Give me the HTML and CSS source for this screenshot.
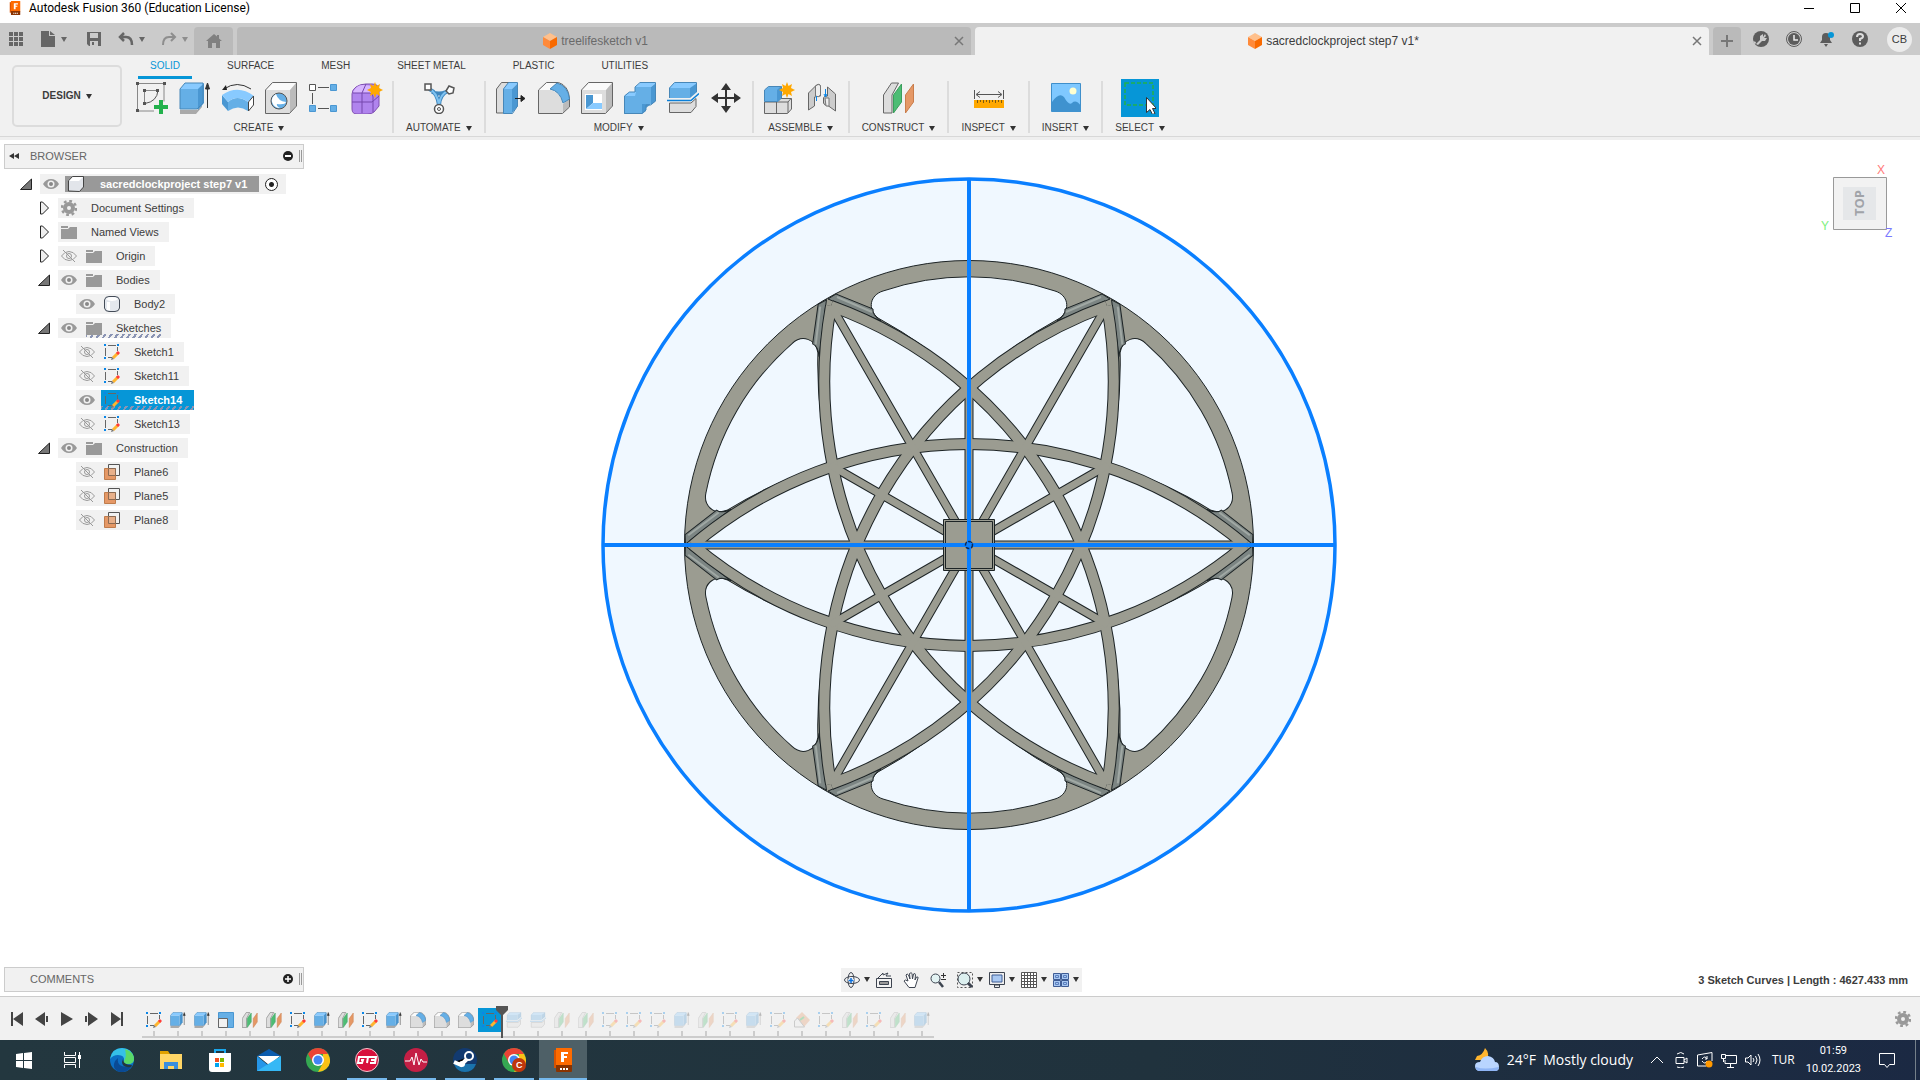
FILE: index.html
```html
<!DOCTYPE html>
<html lang="en">
<head>
    <meta charset="UTF-8">
    <meta name="viewport" content="width=device-width, initial-scale=1.0">
    <title>Autodesk Fusion 360 (Education License)</title>
    <link rel="stylesheet" href="styles.css">
</head>
<body>
    <!-- Icon library -->
    <svg class="defs" aria-hidden="true">
        <symbol id="fusion" viewBox="0 0 24 24"><path fill="#d95300" d="M3 2h3v18H3z"/><path fill="#ff6b00" d="M5 0h15q1 0 1 1v17H5z"/><path fill="#8a3300" d="M5 17h16v6q0 1-1 1H6q-1 0-1-1z"/><path fill="#fff" d="M10 4h7v2h-4v2h3v2h-3v4h-3z"/><path stroke="#fff" stroke-width="2" stroke-dasharray="2 1" d="M9 21h8"/></symbol>
        <symbol id="cube" viewBox="0 0 16 16"><path fill="#ffc08c" d="M8 0l7 4-7 4-7-4z"/><path fill="#ff8a3a" d="M1 4l7 4v8l-7-4z"/><path fill="#f96a00" d="M15 4L8 8v8l7-4z"/></symbol>
        <symbol id="sketch" viewBox="0 0 16 16"><path fill="none" stroke="#666" d="M4 1.500h8M1.500 4v8M13.500 3v4M4 13.500h4"/><path fill="#0a86e8" d="M0 0h2v2H0zM13 0h2v2h-2zM0 13h2v2H0z"/><path stroke="#ffb52e" stroke-width="3" d="M9 14l5-5"/><path stroke="#ff3b3b" stroke-width="3" d="M13 10l2-2"/><path fill="#777" d="M7 16l1-3 2 2z"/></symbol>
        <symbol id="extrude" viewBox="0 0 32 32"><path fill="#aaa" d="M1 28h17l5-6v3l-6 7H1z"/><path fill="#4a97d2" d="M19 6l6-5v20l-6 7z"/><path fill="#65afe6" d="M1 7h18v20H1z"/><path fill="#88caff" d="M1 7l5-6h19l-6 6z"/><path fill="none" stroke="#4787b8" d="M1 27V7l5-6h18v20l-6 6z"/><path stroke="#333" fill="#333" d="M28.500 26V4M26.500 7l2-6 2 6z"/></symbol>
        <symbol id="create-sketch" viewBox="0 0 32 32"><g fill="none" stroke="#888"><path d="M3 1.500h25v18M1.500 3v26H18M9 8.500h12.500M8.500 10v10"/><path stroke="#555" d="M9 21.500q12-2 13-13"/></g><path fill="#555" d="M0 0h3v3H0zM27 0h3v3h-3zM0 27h3v3H0zM7 7h3v3H7zM20 7h3v3h-3zM7 20h3v3H7z"/><path fill="#22b14c" d="M23 18h4v5h5v4h-5v5h-4v-5h-5v-4h5z"/></symbol>
        <symbol id="revolve" viewBox="0 0 32 32"><path fill="#4a97d2" d="M0 13l6 7v9l-6-7z"/><path fill="#65afe6" d="M6 20q9-8 20 0v9q-10-7-20 0z"/><path fill="#88caff" d="M0 13q16-11 32 1l-6 6q-11-8-20 0z"/><path fill="#fff" stroke="#444" d="M26.500 20l5-6v9l-5 6z"/><path fill="none" stroke="#333" stroke-width="1" d="M2 7Q15-2 29 7"/><path fill="#222" d="M0 8l4-5 1 5z"/></symbol>
        <symbol id="box" viewBox="0 0 32 32"><path fill="#ddd" d="M1 8h24v23H1z"/><path fill="#fafafa" d="M1 8l7-7h23l-6 7z"/><path fill="#bbb" d="M25 8l6-7v23l-6 7z"/><path fill="none" stroke="#666" d="M.5 31.500V8l7-7.500h24V24l-7 7.500z"/></symbol>
        <symbol id="hole" viewBox="0 0 32 32"><use href="#box"/><circle cx="14" cy="19" r="8" fill="#65afe6" stroke="#555"/><path fill="#fff" d="M11 12q-5 3-4 8 2 6 8 6-4-2-3-4 8 1 9-2-8-1-10-8z"/></symbol>
        <symbol id="pattern" viewBox="0 0 32 32"><path fill="none" stroke="#555" d="M10 5.500h11M4.500 11v11M10 26.500h11"/><path fill="#fff" stroke="#555" d="M1.500 2.500h6v6h-6z"/><path fill="#65afe6" stroke="#4a97d2" d="M22.500 2.500h6v6h-6zM1.500 23.500h6v6h-6zM22.500 23.500h6v6h-6z"/></symbol>
        <symbol id="star" viewBox="0 0 16 16"><path fill="#ffa800" d="M8 0l1.500 4L13 2l-1 4 4 2-4 2 1 4-3.500-2L8 16l-1.500-4L3 14l1-4-4-2 4-2-1-4 3.500 2z"/></symbol>
        <symbol id="form" viewBox="0 0 32 32"><path fill="#b084ee" stroke="#8050b0" d="M1 12q0-4 4-7t10-3h6q7 0 7 6v16l-5 6q-2 2-7 2H6q-5 0-5-5z"/><path fill="#d7b5ff" d="M2 10q4-8 11-7l9 1-2 7H3z"/><path fill="none" stroke="#7546ad" d="M1 20h20l7-6M11 31V11l4-9M2 11h17q3 0 3 4v15M22 12l5-6"/><use href="#star" x="16" y="0" width="16" height="16"/></symbol>
        <symbol id="automate" viewBox="0 0 32 32"><path fill="none" stroke="#3f86bd" stroke-width="4" d="M6 7q8 3 10 16M25 9q-8 3-9 14M9 10q7 3 14 0"/><path fill="none" stroke="#7fc3f2" stroke-width="2" d="M6 7q8 3 10 16M25 9q-8 3-9 14"/><path fill="#fff" stroke="#555" stroke-width="1.500" d="M2 2h6v6H2zM23 9l3-5 5 2-1 5-4 1z"/><circle cx="16" cy="27" r="4.500" fill="#fff" stroke="#555" stroke-width="1.500"/><circle cx="16" cy="27" r="1.500" fill="none" stroke="#555"/></symbol>
        <symbol id="presspull" viewBox="0 0 32 32"><path fill="#ddd" stroke="#666" d="M1.500 31V7l5-6.500h8L9 7v24z"/><path fill="#65afe6" d="M8 7h9v25H8z"/><path fill="#88caff" d="M8 7l5-6h10l-6 6z"/><path fill="#4a97d2" d="M17 7l6-6v23l-6 7z"/><path fill="none" stroke="#4787b8" d="M8.500 31.500V7l5-6.500h9V24l-5 7.500z"/><path stroke="#222" fill="#222" d="M20 16.500h7M26 13.500l4 3-4 3z"/></symbol>
        <symbol id="fillet" viewBox="0 0 32 32"><path fill="#fafafa" d="M1 8l8-7h12q10 3 11 17l-7 4Q22 8 12 8z"/><path fill="#ddd" d="M1 8h12q10 3 12 14v9H1z"/><path fill="#bbb" d="M25 22l6-5v8l-6 6z"/><path fill="none" stroke="#666" d="M.5 31.500V8l8-7.500h12q10 3 11 16V25l-7 6.500z"/><path fill="#65afe6" stroke="#4787b8" d="M12 7l7-6q11 3 12.500 16L25 21Q22 9 12 7z"/></symbol>
        <symbol id="shell" viewBox="0 0 32 32"><use href="#box"/><path fill="#fff" d="M4 12h17v16H4z"/><path fill="#4a97d2" d="M5 13h7v8l-7 6z"/><path fill="#88caff" d="M5 27l7-6h9v6z"/></symbol>
        <symbol id="combine" viewBox="0 0 32 32"><path fill="#65afe6" d="M0 14h11V5h16v17h-9v10H0z"/><path fill="#88caff" d="M0 14l5-4h7l-1 4zM11 5l5-4h16l-5 4z"/><path fill="#4a97d2" d="M27 5l5-4v18l-5 4zM18 22h9l-5 4v3l-4 3z"/><path fill="none" stroke="#4787b8" d="M.5 31.500V14l5-4H11V5L16 .5h15.500V19l-5 4H22v5l-4 3.500z"/></symbol>
        <symbol id="split" viewBox="0 0 32 32"><path fill="#ddd" stroke="#666" d="M2.500 30.500V21H24l5-4.500v8l-5 6z"/><path fill="#65afe6" d="M2 6h21v10H2z"/><path fill="#88caff" d="M2 6l5-5h23l-6 5z"/><path fill="#4a97d2" d="M23 6l7-5v9l-7 6z"/><path fill="none" stroke="#4787b8" d="M2.500 16V6l5-5.500h22V10"/><path fill="none" stroke="#0a7fd8" stroke-width="1.500" d="M0 18.500h24l8-7"/></symbol>
        <symbol id="move" viewBox="0 0 32 32"><path fill="#333" d="M16 1l5 7h-4v7h7v-4l7 5-7 5v-4h-7v7h4l-5 7-5-7h4v-7H8v4l-7-5 7-5v4h7V8h-4z"/></symbol>
        <symbol id="component" viewBox="0 0 32 32"><path fill="#ddd" stroke="#666" d="M1.500 31.500V20l5-3.500h22V27l-4 4.500zM13.500 31V20l4-4M2 20h23v11M25 20l3-3.500"/><path fill="#65afe6" stroke="#4787b8" d="M1.500 19.500V8l4-3.500h13V16L15 19.500z"/><path fill="#4a97d2" d="M14 8l4-4v12l-4 4z"/><use href="#star" x="16" y="0" width="16" height="16"/></symbol>
        <symbol id="joint" viewBox="0 0 32 32"><path fill="#ccc" stroke="#666" d="M2.500 28V11l8-8q4-2 4 2v9l-6 1v9zM17.500 16q0-2 4-2V5l8 7v17l-7-5q-5-1-5-3z"/><path fill="#eee" stroke="#777" d="M9.500 4q4-3 5 0v9q-2 3-5 1zM19 16h4v8h-3z"/><path fill="none" stroke="#0a86e8" d="M10.500 14v5M19.500 7v7M18 12l1.500 3 1.500-3"/></symbol>
        <symbol id="plane" viewBox="0 0 32 32"><path fill="#ddd" stroke="#666" d="M.5 31V13l8-12h7L9 13v18z"/><path fill="#4dbd74" stroke="#3a9e5c" d="M10.500 31V13l8-11v18z"/><path fill="#e59866" stroke="#c97d4b" d="M22.500 31V13l8-11v18z"/></symbol>
        <symbol id="measure" viewBox="0 0 32 32"><path fill="none" stroke="#555" d="M1.500 8v9M30.500 8v9M4 12.500h24M7 9.500l-4 3 4 3M25 9.500l4 3-4 3"/><path fill="#ffa800" d="M1 18h30v8H1z"/><path stroke="#7c5a10" d="M4.500 18v3M7.500 18v2M10.500 18v3M13.500 18v2M16.500 18v3M19.500 18v2M22.500 18v3M25.500 18v2M28.500 18v3"/></symbol>
        <symbol id="insert" viewBox="0 0 32 32"><path fill="#7fc8ff" stroke="#3f8fcb" d="M1.500 1.500h29v28h-29z"/><circle cx="23" cy="9" r="3.500" fill="#ffffd0"/><path fill="#3f92cf" d="M2 20q7-10 12-5 5 9 8 6 4-4 9 3v6H2z"/></symbol>
        <symbol id="select" viewBox="0 0 32 32"><path fill="none" stroke="#22b14c" stroke-width="1.500" stroke-dasharray="4 2" d="M1 1h28v22H1z"/><path fill="#fff" stroke="#333" d="M22.500 15.500v15l3.500-3 2.500 5 2.500-1-2.500-5h4z"/></symbol>
        <symbol id="scale" viewBox="0 0 16 16"><path fill="#65afe6" stroke="#4a97d2" d="M.5.5h15v15h-15z"/><path fill="#f1f1f1" stroke="#666" d="M.5 6.500h9v9h-9z"/></symbol>
        <symbol id="decal" viewBox="0 0 16 16"><path fill="#e59866" d="M2 6l6-6 8 8-6 7z"/><path fill="#eee" stroke="#777" d="M.5 15V9l3-3 7 9z"/><path stroke="#22b14c" stroke-width="2" d="M6 8l4-3"/></symbol>
        <symbol id="eye" viewBox="0 0 16 16"><path fill="#999" d="M0 8q3-5 8-5t8 5q-3 5-8 5T0 8z"/><circle cx="8" cy="8" r="3.500" fill="#f1f1f1"/><circle cx="8" cy="8" r="2" fill="#888"/></symbol>
        <symbol id="eye-off" viewBox="0 0 16 16"><g fill="none" stroke="#999"><path d="M.5 8q3-4.500 7.500-4.500T15.500 8q-3 4.500-7.500 4.500T.5 8z"/><circle cx="8" cy="8" r="2.500"/><path d="M2 2l12 12"/></g></symbol>
        <symbol id="folder" viewBox="0 0 16 16"><path fill="#999" d="M0 2h7v2H0zM0 5h7l2-2h7v12H0z"/></symbol>
        <symbol id="gear" viewBox="0 0 16 16"><circle cx="8" cy="8" r="4" fill="none" stroke="#999" stroke-width="4"/><circle cx="8" cy="8" r="7" fill="none" stroke="#999" stroke-width="2.500" stroke-dasharray="2.750 2.750"/></symbol>
        <symbol id="body" viewBox="0 0 16 16"><path fill="#e4e8ee" stroke="#444c58" d="M.5 4Q1 .5 5 .5h6q4 0 4.500 3.500v8q-.5 3.500-4.500 3.500H5Q1 15.500.5 12z"/><path fill="#fff" d="M2 3q2-2 6-2t6 2q-2 2-6 2T2 3zM3 6h3v8H3z"/></symbol>
        <symbol id="root" viewBox="0 0 16 16"><path fill="#e2e5ea" stroke="#444" d="M.5 15V5l4-4.500h11V11l-4 4.500z"/><path fill="#fff" d="M1 5l4-4h10l-4 4z"/></symbol>
        <symbol id="cplane" viewBox="0 0 16 16"><path fill="none" stroke="#555" d="M4.500 11V.5h11v11H12"/><path fill="#e59866" stroke="#bf7c4c" d="M.5 4.500h11v11H.5z"/><path fill="#e8b08a" stroke="#8c6a52" d="M4.500 4.500h7v7h-7z"/></symbol>
        <symbol id="open" viewBox="0 0 12 12"><path fill="#777" stroke="#222" d="M.5 11.500h11V1z"/></symbol>
        <symbol id="closed" viewBox="0 0 12 14"><path fill="#eee" stroke="#222" d="M2.500 1h2l6 6-6 6h-2z"/></symbol>
    </svg>

    <header class="titlebar">
        <svg class="i14"><use href="#fusion"/></svg>
        <h1>Autodesk Fusion 360 (Education License)</h1>
        <div class="window-buttons">
            <button aria-label="Minimize"><svg viewBox="0 0 12 12"><path d="M1 6.500h10"/></svg></button>
            <button aria-label="Maximize"><svg viewBox="0 0 12 12"><path d="M1.500 1.500h9v9h-9z"/></svg></button>
            <button aria-label="Close"><svg viewBox="0 0 12 12"><path d="M1 1l10 10M11 1L1 11"/></svg></button>
        </div>
    </header>

    <nav class="tabbar">
        <div class="quick">
            <button aria-label="Data panel"><svg viewBox="0 0 16 16"><path fill="#666" d="M1 1h4v4H1zM6 1h4v4H6zM11 1h4v4h-4zM1 6h4v4H1zM6 6h4v4H6zM11 6h4v4h-4zM1 11h4v4H1zM6 11h4v4H6zM11 11h4v4h-4z"/></svg></button>
            <button class="file" aria-label="File"><svg viewBox="0 0 16 16"><path fill="#666" d="M1 0h8v5h6v11H1zM10 0l5 4h-5z"/></svg><span class="caret"></span></button>
            <button class="save" aria-label="Save"><svg viewBox="0 0 16 16"><path fill="#666" fill-rule="evenodd" d="M1 1h14v14H3l-2-2zm3 1v5h8V2zm0 8v5h8v-5zm2 1h2v3H6z"/></svg></button>
            <button aria-label="Undo"><svg viewBox="0 0 16 16"><path fill="none" stroke="#666" stroke-width="2.500" d="M6 2L2 6l4 4M2 6h6q6 0 6 8"/></svg><span class="caret"></span></button>
            <button class="dim" aria-label="Redo"><svg viewBox="0 0 16 16"><path fill="none" stroke="#666" stroke-width="2" d="M10 2l4 4-4 4M14 6H8q-6 0-6 8"/></svg><span class="caret"></span></button>
        </div>
        <button class="home" aria-label="Home"><svg viewBox="0 0 16 16"><path fill="#808080" d="M0 8l8-7 3 2.500V2h2v3.500L16 8h-2v7h-4v-5H6v5H2V8z"/></svg></button>
        <div class="tab"><a href="#"><svg class="i16"><use href="#cube"/></svg>treelifesketch v1</a><button class="close" aria-label="Close tab"><svg viewBox="0 0 12 12"><path d="M2 2l8 8M10 2l-8 8"/></svg></button></div>
        <div class="tab current"><a href="#"><svg class="i16"><use href="#cube"/></svg>sacredclockproject step7 v1*</a><button class="close" aria-label="Close tab"><svg viewBox="0 0 12 12"><path d="M2 2l8 8M10 2l-8 8"/></svg></button></div>
        <button class="new-tab" aria-label="New design"><svg viewBox="0 0 16 16"><path stroke="#777" stroke-width="2" d="M8 2v12M2 8h12"/></svg></button>
        <div class="account">
            <button aria-label="Extensions"><svg viewBox="0 0 16 16"><circle cx="8" cy="8" r="8" fill="#5c5c5c"/><path fill="#ccc" d="M3 13l4-4V5l3-2v3l2-3 1 2-2 2h3l-2 3H9l-4 4zM0 10l3 1-1 3z"/></svg></button>
            <button aria-label="Job status"><svg viewBox="0 0 16 16"><circle cx="8" cy="8" r="7.500" fill="#ccc" stroke="#5c5c5c"/><circle cx="8" cy="8" r="6" fill="#5c5c5c"/><path fill="none" stroke="#eee" stroke-width="1.500" d="M8 4v5h4"/></svg></button>
            <button aria-label="Notifications"><svg viewBox="0 0 16 16"><path fill="#5c5c5c" d="M1 12l2-3V6q0-4 4-4t4 4v3l2 3zM5 13h4l-2 3z"/><circle cx="12" cy="4" r="3" fill="#0696d7"/></svg></button>
            <button aria-label="Help"><svg viewBox="0 0 16 16"><circle cx="8" cy="8" r="8" fill="#5c5c5c"/><path fill="none" stroke="#ddd" stroke-width="2" d="M5 6q0-3 3-3t3 2.500Q11 7 8 8v2M8 11.500v2"/></svg></button>
            <button class="avatar">CB</button>
        </div>
    </nav>

    <section class="ribbon">
        <button class="workspace-switch">DESIGN<span class="caret"></span></button>
        <div class="ribbon-main">
            <nav class="ribbon-tabs">
                <a href="#" class="on">SOLID</a><a href="#">SURFACE</a><a href="#">MESH</a><a href="#">SHEET METAL</a><a href="#">PLASTIC</a><a href="#">UTILITIES</a>
            </nav>
            <div class="groups">
                <div class="group">
                    <div class="tools"><button aria-label="Create Sketch"><svg><use href="#create-sketch"/></svg></button><button aria-label="Extrude"><svg><use href="#extrude"/></svg></button><button aria-label="Revolve"><svg><use href="#revolve"/></svg></button><button aria-label="Hole"><svg><use href="#hole"/></svg></button><button aria-label="Pattern"><svg><use href="#pattern"/></svg></button><button aria-label="Create Form"><svg><use href="#form"/></svg></button></div>
                    <button class="menu">CREATE<span class="caret"></span></button>
                </div>
                <div class="group">
                    <div class="tools"><button aria-label="Automated Modeling"><svg><use href="#automate"/></svg></button></div>
                    <button class="menu">AUTOMATE<span class="caret"></span></button>
                </div>
                <div class="group">
                    <div class="tools"><button aria-label="Press Pull"><svg><use href="#presspull"/></svg></button><button aria-label="Fillet"><svg><use href="#fillet"/></svg></button><button aria-label="Shell"><svg><use href="#shell"/></svg></button><button aria-label="Combine"><svg><use href="#combine"/></svg></button><button aria-label="Split Body"><svg><use href="#split"/></svg></button><button aria-label="Move"><svg><use href="#move"/></svg></button></div>
                    <button class="menu">MODIFY<span class="caret"></span></button>
                </div>
                <div class="group">
                    <div class="tools"><button aria-label="New Component"><svg><use href="#component"/></svg></button><button aria-label="Joint"><svg><use href="#joint"/></svg></button></div>
                    <button class="menu">ASSEMBLE<span class="caret"></span></button>
                </div>
                <div class="group">
                    <div class="tools"><button aria-label="Offset Plane"><svg><use href="#plane"/></svg></button></div>
                    <button class="menu">CONSTRUCT<span class="caret"></span></button>
                </div>
                <div class="group">
                    <div class="tools"><button aria-label="Measure"><svg><use href="#measure"/></svg></button></div>
                    <button class="menu">INSPECT<span class="caret"></span></button>
                </div>
                <div class="group">
                    <div class="tools"><button aria-label="Insert Canvas"><svg><use href="#insert"/></svg></button></div>
                    <button class="menu">INSERT<span class="caret"></span></button>
                </div>
                <div class="group">
                    <div class="tools"><button class="active" aria-label="Select"><svg><use href="#select"/></svg></button></div>
                    <button class="menu">SELECT<span class="caret"></span></button>
                </div>
            </div>
        </div>
    </section>

    <main class="workspace">
        <aside class="browser">
            <div class="panel-head">
                <button aria-label="Collapse"><svg viewBox="0 0 12 12"><path fill="#333" d="M6 3v6L1 6zM11 3v6L6 6z"/></svg></button>
                <h2>BROWSER</h2>
                <button aria-label="Hide panel"><svg viewBox="0 0 12 12"><circle cx="6" cy="6" r="5" fill="#222"/><path stroke="#fff" stroke-width="2" d="M3 6h6"/></svg></button>
                <span class="grip"></span>
            </div>
            <ul class="tree">
                <li class="l1"><svg class="arrow"><use href="#open"/></svg><div class="chip root"><svg><use href="#eye"/></svg><span class="root-name"><svg><use href="#root"/></svg><b>sacredclockproject step7 v1</b></span><input type="radio" checked aria-label="Activate component"></div></li>
                <li class="l2"><svg class="arrow"><use href="#closed"/></svg><div class="chip"><svg><use href="#gear"/></svg><span>Document Settings</span></div></li>
                <li class="l2"><svg class="arrow"><use href="#closed"/></svg><div class="chip"><svg><use href="#folder"/></svg><span>Named Views</span></div></li>
                <li class="l2"><svg class="arrow"><use href="#closed"/></svg><div class="chip"><svg><use href="#eye-off"/></svg><svg><use href="#folder"/></svg><span>Origin</span></div></li>
                <li class="l2"><svg class="arrow"><use href="#open"/></svg><div class="chip"><svg><use href="#eye"/></svg><svg><use href="#folder"/></svg><span>Bodies</span></div></li>
                <li class="l3"><div class="chip"><svg><use href="#eye"/></svg><svg><use href="#body"/></svg><span>Body2</span></div></li>
                <li class="l2"><svg class="arrow"><use href="#open"/></svg><div class="chip"><svg><use href="#eye"/></svg><div class="hatched"><svg><use href="#folder"/></svg><span>Sketches</span></div></div></li>
                <li class="l3"><div class="chip"><svg><use href="#eye-off"/></svg><svg><use href="#sketch"/></svg><span>Sketch1</span></div></li>
                <li class="l3"><div class="chip"><svg><use href="#eye-off"/></svg><svg><use href="#sketch"/></svg><span>Sketch11</span></div></li>
                <li class="l3"><div class="chip picked"><svg><use href="#eye"/></svg><div class="hatched"><svg><use href="#sketch"/></svg><b>Sketch14</b></div></div></li>
                <li class="l3"><div class="chip"><svg><use href="#eye-off"/></svg><svg><use href="#sketch"/></svg><span>Sketch13</span></div></li>
                <li class="l2"><svg class="arrow"><use href="#open"/></svg><div class="chip"><svg><use href="#eye"/></svg><svg><use href="#folder"/></svg><span>Construction</span></div></li>
                <li class="l3"><div class="chip"><svg><use href="#eye-off"/></svg><svg><use href="#cplane"/></svg><span>Plane6</span></div></li>
                <li class="l3"><div class="chip"><svg><use href="#eye-off"/></svg><svg><use href="#cplane"/></svg><span>Plane5</span></div></li>
                <li class="l3"><div class="chip"><svg><use href="#eye-off"/></svg><svg><use href="#cplane"/></svg><span>Plane8</span></div></li>
            </ul>
        </aside>

        <svg class="model" viewBox="-368 -368 736 736" role="img" aria-label="Clock body, top view">
            <defs>
                <path id="arc" d="M-276 0A428 428 0 0 1 276 0"/>
                <g id="pair"><use href="#arc"/><use href="#arc" transform="rotate(180)"/></g>
                <g id="arcs"><use href="#pair"/><use href="#pair" transform="rotate(60)"/><use href="#pair" transform="rotate(120)"/></g>
                <path id="spokes" d="M-272 0H272M0-161V161M-136-236L136 236M136-236L-136 236M-139-80L139 80M139-80L-139 80"/>
                <path id="lens" d="M-276 0A428 428 0 0 1 276 0A428 428 0 0 1-276 0z"/>
                <path id="slot" d="M-86-254A268 268 0 0 1 86-254C99-250 102-236 91-227A428 428 0 0 0 0-161A428 428 0 0 0-91-227C-102-236-99-250-86-254z"/>
                <g id="bevel"><path fill="#7c8583" stroke="#1d2426" d="M-133-251L-96-236Q-97-230-88-224L-141-246z"/><path fill="none" stroke="#a0a8a4" stroke-width="2" d="M-132-248L-97-233"/></g>
                <g id="bevels"><use href="#bevel"/><use href="#bevel" transform="scale(-1 1)"/></g>
            </defs>
            <circle r="366" fill="#f0f8ff"/>
            <circle r="284.500" fill="#9b9c91" stroke="#1d2426"/>
            <g fill="#f0f8ff">
                <use href="#lens"/><use href="#lens" transform="rotate(60)"/><use href="#lens" transform="rotate(120)"/>
                <g stroke="#1d2426"><use href="#slot"/><use href="#slot" transform="rotate(60)"/><use href="#slot" transform="rotate(120)"/><use href="#slot" transform="rotate(180)"/><use href="#slot" transform="rotate(240)"/><use href="#slot" transform="rotate(300)"/></g>
            </g>
            <use href="#bevels"/><use href="#bevels" transform="rotate(60)"/><use href="#bevels" transform="rotate(120)"/><use href="#bevels" transform="rotate(180)"/><use href="#bevels" transform="rotate(240)"/><use href="#bevels" transform="rotate(300)"/>
            <g fill="none" stroke="#1d2426"><use href="#arcs" stroke-width="12"/><use href="#spokes" stroke-width="9"/></g>
            <g fill="none" stroke="#9b9c91"><use href="#arcs" stroke-width="10"/><use href="#spokes" stroke-width="7"/></g>
            <path fill="#9b9c91" stroke="#1d2426" d="M-25.500-25.500h51v51h-51zM-23.500-23.500h47v47h-47z"/>
            <circle r="4" fill="#102a50"/>
            <g fill="none" stroke="#0a7fff"><circle r="366" stroke-width="3.500"/><path stroke-width="4" d="M-366 0H366M0-366V366"/></g>
            <circle r="3.500" fill="none" stroke="#102a50" stroke-width="1.500" stroke-dasharray="3 2"/>
        </svg>

        <svg class="viewcube" viewBox="0 0 80 80" role="img" aria-label="View cube">
            <path fill="#f2f2f2" stroke="#999" d="M13.500 15.500h53v52h-53z"/>
            <path fill="#e5e7e9" d="M23 25h33v33H23z"/>
            <text class="face" transform="translate(44 54) rotate(-90)">TOP</text>
            <text class="axis x" x="57" y="12">X</text>
            <text class="axis y" x="1" y="68">Y</text>
            <text class="axis z" x="65" y="75">Z</text>
        </svg>
    </main>

    <section class="viewbar">
        <div class="panel-head comments">
            <h2>COMMENTS</h2>
            <button aria-label="Show comments"><svg viewBox="0 0 12 12"><circle cx="6" cy="6" r="5" fill="#222"/><path stroke="#fff" stroke-width="1.500" d="M3 6h6M6 3v6"/></svg></button>
            <span class="grip"></span>
        </div>
        <div class="navtools">
            <button aria-label="Orbit"><svg viewBox="0 0 16 16"><g fill="none" stroke="#3d4450"><ellipse cx="8" cy="8" rx="7.500" ry="3.500"/><ellipse cx="7" cy="8" rx="3" ry="7.500"/></g><path fill="none" stroke="#f1f1f1" stroke-width="2" d="M7 5v6M4 8h6"/><path stroke="#0a70e0" stroke-width="1.500" d="M7 6v5M4.500 8.500h5"/></svg><span class="caret"></span></button>
            <button aria-label="Look At"><svg viewBox="0 0 16 16"><path fill="#f4f4f4" stroke="#3d4450" d="M.5 6.500h15v9H.5zM2 6l5-5v2l5-2-2 3h5"/><path fill="#999" stroke="#3d4450" d="M3.500 9.500h9v3h-9z"/></svg></button>
            <button aria-label="Pan"><svg viewBox="0 0 16 16"><path fill="#fff" stroke="#3d4450" d="M6 15.500L1 9q1-2 4 0L3 3q1-2 2.500 0L7 7 6.500 1.500q2-1.500 2.500 0L9.500 7l1-5q2-1 2 .5L12 8l1.500-3q2-.5 1.500 1l-3 9.500z"/></svg></button>
            <button aria-label="Zoom"><svg viewBox="0 0 16 16"><circle cx="5.500" cy="6.500" r="4.500" fill="#e3f3f3" stroke="#3d4450"/><path stroke="#3d4450" stroke-width="2.500" d="M9 10l4 5"/><path stroke="#333" d="M11 3.500h5M13.500 1v5M11 7.500h5"/></svg></button>
            <button aria-label="Fit"><svg viewBox="0 0 16 16"><path fill="none" stroke="#555" stroke-dasharray="2 2" d="M.5.500h15v15H.5z"/><circle cx="7" cy="7" r="6" fill="#dcefef" stroke="#3d4450"/><path stroke="#3d4450" stroke-width="3" d="M11 11l4 4"/></svg><span class="caret"></span></button>
            <button aria-label="Display Settings"><svg viewBox="0 0 16 16"><path fill="#eee" stroke="#3d4450" d="M.5.500h15v12H.5zM5.500 13h5v2.500h-5z"/><path fill="#a9c8f2" stroke="#3f5c94" d="M3 3h10v7H3z"/></svg><span class="caret"></span></button>
            <button aria-label="Grid and Snaps"><svg viewBox="0 0 16 16"><path fill="#fff" stroke="#555" d="M.5.500h15v15H.5zM3.500 1v15M6.500 1v15M9.500 1v15M12.500 1v15M1 3.500h15M1 6.500h15M1 9.500h15M1 12.500h15"/></svg><span class="caret"></span></button>
            <button aria-label="Viewports"><svg viewBox="0 0 16 16"><path fill="#a9c8f2" stroke="#3f5c94" d="M.5 1.500h7v6h-7zM8.500 1.500h7v6h-7zM.5 8.500h7v6h-7zM8.500 8.500h7v6h-7z"/><path fill="none" stroke="#5b7fbd" d="M2.500 3.500h3v2h-3zM10.500 3.500h3v2h-3zM2.500 10.500h3v2h-3zM10.500 10.500h3v2h-3z"/></svg><span class="caret"></span></button>
        </div>
        <p class="status">3 Sketch Curves | Length : 4627.433 mm</p>
    </section>

    <section class="timeline">
        <div class="playback">
            <button aria-label="First"><svg viewBox="0 0 14 14"><path d="M1 0h2v14H1zM13 0v14L3 7z"/></svg></button>
            <button aria-label="Previous"><svg viewBox="0 0 14 14"><path d="M10 0v14L0 7zM11 4h2v6h-2z"/></svg></button>
            <button aria-label="Play"><svg viewBox="0 0 14 14"><path d="M1 0l12 7-12 7z"/></svg></button>
            <button aria-label="Next"><svg viewBox="0 0 14 14"><path d="M3 0l10 7-10 7zM0 4h2v6H0z"/></svg></button>
            <button aria-label="Last"><svg viewBox="0 0 14 14"><path d="M1 0l10 7-10 7zM11 0h2v14h-2z"/></svg></button>
        </div>
        <ol class="features">
            <li><svg><use href="#sketch"/></svg></li>
            <li><svg><use href="#extrude"/></svg></li>
            <li><svg><use href="#extrude"/></svg></li>
            <li><svg><use href="#scale"/></svg></li>
            <li><svg><use href="#plane"/></svg></li>
            <li><svg><use href="#plane"/></svg></li>
            <li><svg><use href="#sketch"/></svg></li>
            <li><svg><use href="#extrude"/></svg></li>
            <li><svg><use href="#plane"/></svg></li>
            <li><svg><use href="#sketch"/></svg></li>
            <li><svg><use href="#extrude"/></svg></li>
            <li><svg><use href="#fillet"/></svg></li>
            <li><svg><use href="#fillet"/></svg></li>
            <li><svg><use href="#fillet"/></svg></li>
            <li class="now"><svg><use href="#sketch"/></svg><svg class="marker" viewBox="0 0 12 32"><path fill="#555" d="M0 0h12v4L7 9v23H5V9L0 4z"/></svg></li>
            <li class="later"><svg><use href="#split"/></svg></li>
            <li class="later"><svg><use href="#split"/></svg></li>
            <li class="later"><svg><use href="#plane"/></svg></li>
            <li class="later"><svg><use href="#plane"/></svg></li>
            <li class="later"><svg><use href="#sketch"/></svg></li>
            <li class="later"><svg><use href="#sketch"/></svg></li>
            <li class="later"><svg><use href="#sketch"/></svg></li>
            <li class="later"><svg><use href="#extrude"/></svg></li>
            <li class="later"><svg><use href="#plane"/></svg></li>
            <li class="later"><svg><use href="#sketch"/></svg></li>
            <li class="later"><svg><use href="#extrude"/></svg></li>
            <li class="later"><svg><use href="#sketch"/></svg></li>
            <li class="later"><svg><use href="#decal"/></svg></li>
            <li class="later"><svg><use href="#sketch"/></svg></li>
            <li class="later"><svg><use href="#plane"/></svg></li>
            <li class="later"><svg><use href="#sketch"/></svg></li>
            <li class="later"><svg><use href="#plane"/></svg></li>
            <li class="later"><svg><use href="#extrude"/></svg></li>
        </ol>
        <button class="settings" aria-label="Timeline settings"><svg class="i16"><use href="#gear"/></svg></button>
    </section>

    <footer class="taskbar">
        <div class="apps">
            <button aria-label="Start"><svg viewBox="0 0 24 24"><path fill="#fff" d="M4 6l7-1v7H4zM12 5l8-1v8h-8zM4 13h7v7l-7-1zM12 13h8v8l-8-1z"/></svg></button>
            <button aria-label="Task View"><svg viewBox="0 0 24 24"><g fill="none" stroke="#fff"><path d="M3.500 4v3.500h11V4M3.500 20v-3.500h11V20M3.500 9.500h11v5h-11zM18.500 4v16"/></g><path fill="#fff" d="M17 7h3v4h-3z"/></svg></button>
            <button aria-label="Edge"><svg viewBox="0 0 24 24"><circle cx="12" cy="12" r="12" fill="#0c6fc4"/><path fill="#35c1e8" d="M0 11Q2 0 12 0t12 10q0 6-6 6-5 0-4-3 1-6-6-6-5 0-8 4z"/><path fill="#5bd968" d="M15 1q9 3 9 10 0 5-6 5-5 0-4-3 3-5 1-12z"/><path fill="#0a4a94" d="M8 10q-2 11 14 8-5 7-12 6-7-2-6-8 1-4 4-6z"/><path fill="#23373f" d="M13 11q0 6 9 6l-1 2q-9 1-9-5z"/></svg></button>
            <button aria-label="File Explorer"><svg viewBox="0 0 24 24"><path fill="#e0a100" d="M1 3h8l2 3H1z"/><path fill="#ffd666" d="M1 6h22v15H1z"/><path fill="#3a8ede" d="M5 21v-7h14v7h-4v-3H9v3z"/></svg></button>
            <button aria-label="Store"><svg viewBox="0 0 24 24"><path fill="none" stroke="#1aa7ec" stroke-width="2" d="M7 6V2h10v4"/><path fill="#fff" d="M1 5h22v16q0 3-3 3H4q-3 0-3-3z"/><path fill="#f25022" d="M7 10h4v4H7z"/><path fill="#7fba00" d="M12 10h4v4h-4z"/><path fill="#00a4ef" d="M7 15h4v4H7z"/><path fill="#ffb900" d="M12 15h4v4h-4z"/></svg></button>
            <button aria-label="Mail"><svg viewBox="0 0 24 24"><path fill="#0b5cad" d="M0 8l12-7 12 7z"/><path fill="#fff" d="M1 8h22L12 17z"/><path fill="#2596e8" d="M0 8l12 10 12-10v15H0z"/><path fill="#35b8f5" d="M0 23l24-15v15z"/></svg></button>
            <button aria-label="Chrome"><svg viewBox="0 0 24 24"><circle cx="12" cy="12" r="12" fill="#35a852"/><path fill="#ea4335" d="M2 6Q5 0 12 0t10 6H12L7 15z"/><path fill="#fbc116" d="M22 6q5 9-2 15-4 3-8 3l5-9V6z"/><circle cx="12" cy="12" r="6" fill="#fff"/><circle cx="12" cy="12" r="4.500" fill="#4285f4"/></svg></button>
            <button class="running" aria-label="GT3"><svg viewBox="0 0 24 24"><circle cx="12" cy="12" r="11.500" fill="#d8103c" stroke="#f3c6cf"/><path fill="none" stroke="#fff" stroke-width="2" d="M9 9H4l-1 6h4l1-3H6M9 9h7M13 9l-1 6M16 9h5l-1 6h-5M16 12h4"/></svg></button>
            <button class="running" aria-label="Audio"><svg viewBox="0 0 24 24"><circle cx="12" cy="12" r="12" fill="#c41f45"/><path fill="none" stroke="#fff" d="M1 13h5l2-4 2 8 2-12 3 12 2-6 2 3h4"/></svg></button>
            <button class="running" aria-label="Steam"><svg viewBox="0 0 24 24"><circle cx="12" cy="12" r="12" fill="#123a70"/><path fill="#1a73ac" d="M1 16q6 2 11 0h11q-3 8-11 8T1 16z"/><path stroke="#fff" stroke-width="4" d="M1 14l7 3 8-8"/><circle cx="16" cy="8" r="4" fill="#123a70" stroke="#fff" stroke-width="2"/><circle cx="9" cy="16" r="3" fill="#fff"/></svg></button>
            <button class="running" aria-label="Chrome profile"><svg viewBox="0 0 24 24"><circle cx="12" cy="12" r="12" fill="#35a852"/><path fill="#ea4335" d="M2 6Q5 0 12 0t10 6H12L7 15z"/><path fill="#fbc116" d="M22 6q5 9-2 15-4 3-8 3l5-9V6z"/><circle cx="12" cy="12" r="6" fill="#fff"/><circle cx="12" cy="12" r="4.500" fill="#4285f4"/><circle cx="17" cy="17" r="7" fill="#bf360c"/><text class="badge" x="14" y="20">C</text></svg></button>
            <button class="running front" aria-label="Fusion 360"><svg><use href="#fusion"/></svg></button>
        </div>
        <div class="tray">
            <button class="weather"><svg viewBox="0 0 24 24"><path fill="#ffb52e" d="M10 0q5 5 2 12H0l2-4q6-1 8-8z"/><path fill="#b9d5ff" d="M4 23q-4-1-4-5t5-4q2-6 8-6 6 1 7 6 4 0 4 5 0 4-4 4z"/><path fill="#8fb5f5" d="M4 23q-4-1-3-4 8 3 23 0 0 4-4 4z"/></svg>24°F&nbsp; Mostly cloudy</button>
            <button aria-label="Hidden icons"><svg viewBox="0 0 16 16"><path d="M2 11l6-6 6 6"/></svg></button>
            <button aria-label="Meet Now"><svg viewBox="0 0 16 16"><path d="M3 5.500h8v6H3zM11 8l3-2v5l-3-2M4 2q4-3 7 0M4 15q4 2 7 0"/></svg></button>
            <button aria-label="Update"><svg viewBox="0 0 16 16"><path d="M9 14H.5V3L15 .5V9M5 7q3-4 5 0M10 4v3H8M5 9q3 4 5 0"/><circle cx="12" cy="12" r="3.500" class="dot"/></svg></button>
            <button aria-label="Network"><svg viewBox="0 0 16 16"><path d="M5 3.500h10.500v8H4V8M9.500 12v3M6 15.500h7M.5 2.500h4v4h-4zM2.500 7v3"/></svg></button>
            <button aria-label="Volume"><svg viewBox="0 0 16 16"><path d="M.5 6v4H3l3 3V3L3 6zM8 6q2 2 0 4M10.500 4q3 4 0 8M13 2q4 6 0 12"/></svg></button>
            <button class="lang">TUR</button>
            <button class="clock"><time>01:59</time><time>10.02.2023</time></button>
            <button class="inbox" aria-label="Action Center"><svg viewBox="0 0 16 16"><path d="M.5 1.500h15v11h-5L8 15.500l-2.500-3h-5z"/></svg></button>
        </div>
    </footer>
</body>
</html>
```
FILE: styles.css
```css
:root {
    --bar: #f1f1f1;
    --line: #dcdcdc;
    --text: #3c3c3c;
    --blue: #0696d7;
}

* {
    box-sizing: border-box;
    margin: 0;
    padding: 0;
}

body {
    min-height: 100vh;
    display: flex;
    flex-direction: column;
    background: #fff;
    color: var(--text);
    font: 11px/16px "Liberation Sans", Arial, sans-serif;
}

button {
    display: flex;
    align-items: center;
    justify-content: center;
    border: none;
    background: none;
    color: inherit;
    font: inherit;
}

a {
    color: inherit;
    text-decoration: none;
}

ul, ol {
    list-style: none;
}

svg {
    display: block;
    flex: none;
}

.defs {
    position: absolute;
    width: 0;
    height: 0;
}

.i14 {
    width: 14px;
    height: 16px;
}

.i16 {
    width: 16px;
    height: 16px;
}

.caret {
    border: 3px solid transparent;
    border-top: 5px solid #333;
    border-bottom: none;
    margin-left: 5px;
}

/* Title bar */
.titlebar {
    display: flex;
    align-items: center;
    height: 23px;
    padding: 0 13px 7px 8px;
    gap: 7px;
    color: #000;
}

.titlebar h1 {
    flex: 1;
    font: 12px/16px Roboto, sans-serif;
}

.window-buttons {
    display: flex;
    gap: 34px;
}

.window-buttons svg,
.close svg {
    width: 12px;
    height: 12px;
    fill: none;
    stroke: #000;
}

/* Document tabs */
.tabbar {
    display: flex;
    align-items: flex-end;
    height: 32px;
    background: #cbcbcb;
}

.quick {
    width: 194px;
    height: 32px;
    padding-left: 8px;
    display: flex;
    align-items: center;
    gap: 16px;
}

.quick svg,
.home svg,
.new-tab svg,
.account svg {
    width: 16px;
    height: 16px;
}

.quick .caret {
    border-top-color: #666;
}

.quick .save {
    margin-left: 3px;
}

.quick .dim {
    opacity: 0.6;
}

.home,
.tab,
.new-tab {
    height: 28px;
    background: #bababa;
    border-radius: 4px 4px 0 0;
}

.home {
    width: 39px;
    margin-right: 4px;
}

.tab {
    flex: 1;
    display: flex;
    align-items: center;
    margin-right: 4px;
    padding-right: 6px;
    color: #6a6a6a;
    font-size: 12px;
}

.tab a {
    flex: 1;
    display: flex;
    justify-content: center;
    gap: 3px;
}

.tab .close svg {
    stroke: #777;
    stroke-width: 1.5;
}

.tab.current {
    background: var(--bar);
    color: var(--text);
}

.new-tab {
    width: 28px;
}

.account {
    display: flex;
    align-items: center;
    gap: 17px;
    height: 32px;
    padding: 0 8px 0 12px;
}

.avatar {
    width: 25px;
    height: 25px;
    margin-left: 2px;
    border-radius: 50%;
    background: #ececec;
    font-size: 11px;
}

/* Ribbon */
.ribbon {
    display: flex;
    height: 85px;
    padding-left: 12px;
    background: var(--bar);
    border-bottom: 3px solid #efefef;
    box-shadow: inset 0 -1px 0 #d8d8d8;
    font-size: 10px;
    line-height: 14px;
}

.workspace-switch {
    width: 110px;
    height: 62px;
    margin: 10px 4px 0 0;
    border: 2px solid var(--line);
    border-radius: 5px;
    font-weight: bold;
}

.ribbon-tabs {
    display: flex;
    gap: 23px;
    padding-left: 12px;
}

.ribbon-tabs a {
    height: 24px;
    padding: 4px 12px 0;
    border-bottom: 3px solid transparent;
}

.ribbon-tabs .on {
    color: var(--blue);
    border-bottom-color: var(--blue);
}

.groups {
    display: flex;
}

.group {
    height: 52px;
    margin-top: 2px;
    padding: 0 4px;
    border-right: 2px solid var(--line);
}

.group:last-child {
    border-right: none;
}

.tools {
    display: flex;
    justify-content: center;
    height: 38px;
    margin-top: -2px;
}

.tools button {
    width: 43px;
}

.tools .active {
    width: 38px;
    background: var(--blue);
}

.tools svg {
    width: 32px;
    height: 32px;
}

.menu {
    width: 100%;
    margin-top: 4px;
    padding: 0 8px;
}

/* Canvas */
.workspace {
    flex: 1;
    display: grid;
    grid-template-columns: 308px 1fr 290px;
    align-items: start;
}

.browser {
    padding: 4px 4px 0;
}

.panel-head {
    display: flex;
    align-items: center;
    height: 25px;
    padding: 0 1px 1px 3px;
    background: var(--bar);
    border: 1px solid #ccc;
}

.panel-head svg {
    width: 12px;
    height: 12px;
}

.panel-head h2 {
    flex: 1;
    margin-left: 10px;
    font-size: 11px;
    font-weight: normal;
    color: #666;
}

.grip {
    width: 3px;
    height: 12px;
    margin-left: 5px;
    border: 1px solid #999;
    border-width: 0 1px;
}

.tree {
    margin-top: 5px;
}

.tree li {
    display: flex;
    align-items: center;
    height: 20px;
    margin-bottom: 4px;
}

.l1 { padding-left: 16px; }
.l2 { padding-left: 34px; }
.l3 { padding-left: 72px; }

.arrow {
    width: 12px;
    height: 14px;
    margin-right: 8px;
}

.chip,
.hatched,
.root-name {
    display: flex;
    align-items: center;
    height: 20px;
}

.chip {
    gap: 9px;
    padding: 0 10px 0 3px;
    background: var(--bar);
}

.chip svg {
    width: 16px;
    height: 16px;
}

.chip span,
.chip b {
    padding-left: 5px;
}

.chip.root {
    gap: 6px;
    padding-right: 8px;
}

.chip .root-name {
    height: 16px;
    padding: 0 12px 0 3px;
    gap: 11px;
    background: #999;
    color: #fff;
}

.chip input {
    appearance: none;
    width: 13px;
    height: 13px;
    border: 1px solid #222;
    border-radius: 50%;
    background: radial-gradient(#222 0 2px, #fff 3px);
}

.hatched {
    gap: 9px;
    background: repeating-linear-gradient(125deg, #8a94b4 0 2px, transparent 2px 5px) left bottom / 100% 4px no-repeat;
}

.picked {
    padding-right: 0;
    gap: 6px;
}

.picked .hatched {
    padding: 0 12px 0 3px;
    background-color: var(--blue);
    color: #fff;
}

.model {
    width: 100%;
    max-width: 736px;
    margin: 37px auto 0;
}

.viewcube {
    width: 80px;
    height: 80px;
    margin: 22px 0 0 190px;
    justify-self: start;
}

.face {
    font: bold 13px "Open Sans", sans-serif;
    fill: #a0a3a8;
}

.axis {
    font: 12px "Liberation Sans", Arial, sans-serif;
}

.x { fill: #ff7a7a; }
.y { fill: #7df07d; }
.z { fill: #7a7aff; }

/* Navigation and status */
.viewbar {
    display: grid;
    grid-template-columns: 304px 1fr 294px;
    align-items: center;
    height: 29px;
    padding: 0 12px 4px 4px;
    margin-top: -1px;
}

.comments {
    margin-right: 4px;
}

.comments h2 {
    margin-left: 22px;
}

.navtools {
    justify-self: center;
    display: flex;
    align-items: center;
    gap: 11px;
    height: 24px;
    padding: 0 8px 0 3px;
    background: var(--bar);
}

.navtools svg {
    width: 16px;
    height: 16px;
}

.navtools .caret {
    margin: 0 -5px 0 4px;
}

.status {
    text-align: right;
    font-weight: bold;
}

/* Timeline */
.timeline {
    display: flex;
    align-items: center;
    height: 44px;
    padding: 0 9px 0 10px;
    background: var(--bar);
    border-top: 1px solid #ccc;
}

.playback {
    display: flex;
    gap: 11px;
    width: 132px;
}

.playback svg {
    width: 14px;
    height: 14px;
    fill: #444;
}

.features {
    flex: 1;
    display: flex;
    align-self: flex-end;
}

.features li {
    position: relative;
    display: flex;
    justify-content: center;
    width: 24px;
    height: 30px;
    padding-top: 4px;
    margin-bottom: 2px;
    border-bottom: 2px solid #ccc;
    background: linear-gradient(#ccc, #ccc) center bottom / 2px 5px no-repeat;
}

.features svg {
    width: 16px;
    height: 16px;
}

.features .now {
    background: linear-gradient(var(--blue), var(--blue)) top / 100% 24px no-repeat;
}

.features .marker {
    position: absolute;
    top: -2px;
    right: -6px;
    width: 12px;
    height: 32px;
    z-index: 1;
}

.later svg {
    opacity: 0.3;
}

/* Taskbar */
.taskbar {
    display: flex;
    justify-content: space-between;
    height: 40px;
    background: linear-gradient(90deg, #23373f 0%, #20323d 60%, #1b2943 100%);
    color: #fff;
}

.apps {
    display: flex;
    gap: 1px;
}

.apps button {
    width: 48px;
    border: solid transparent;
    border-width: 2px 0;
}

.apps svg {
    width: 24px;
    height: 24px;
}

.apps .running {
    background: linear-gradient(#76b9ed, #76b9ed) bottom / 40px 2px no-repeat border-box;
}

.apps .front {
    background: linear-gradient(#76b9ed, #76b9ed) bottom / 48px 2px no-repeat border-box, #4e6067;
}

.badge {
    font: bold 9px "Liberation Sans", sans-serif;
    fill: #fff;
}

.tray {
    display: flex;
    align-items: center;
    gap: 8px;
    padding-right: 4px;
    font: 12px/18px "Open Sans", sans-serif;
}

.tray svg {
    width: 16px;
    height: 16px;
    fill: none;
    stroke: #fff;
}

.tray .dot {
    fill: #ff9800;
    stroke: none;
}

.tray .weather {
    gap: 8px;
    margin-right: 8px;
    font-size: 14px;
}

.tray .weather svg {
    width: 24px;
    height: 24px;
    stroke: none;
}

.lang {
    padding: 0 3px;
}

.clock {
    flex-direction: column;
    font: 11px/18px Roboto, sans-serif;
}

.inbox {
    height: 40px;
    padding: 0 20px 0 10px;
    border-right: 1px solid #75808a;
}
```
